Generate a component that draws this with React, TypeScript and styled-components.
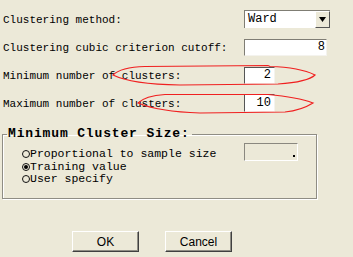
import React from "react";
import styled, { createGlobalStyle } from "styled-components";

const GlobalStyle = createGlobalStyle`
  html, body {
    margin: 0;
    padding: 0;
    background: #ece9d8;
  }
  body {
    font-family: "Liberation Mono", "DejaVu Sans Mono", monospace;
    font-size: 11px;
    color: #000;
  }
`;

const Dialog = styled.div`
  position: relative;
  width: 353px;
  height: 257px;
  overflow: hidden;
  background: #ece9d8;
`;

const Form = styled.div`
  display: grid;
  grid-template-columns: 241px auto;
  grid-auto-rows: 28px;
  align-items: center;
  padding: 5px 0 0 3px;
`;

const Label = styled.div`
  line-height: 13px;
  padding-top: 2px;
  white-space: nowrap;
`;

const TextBox = styled.div<{ $w: number; $h: number; $strong?: boolean }>`
  box-sizing: border-box;
  width: ${p => p.$w}px;
  height: ${p => p.$h}px;
  background: #fff;
  border-top: 1px solid ${p => (p.$strong ? "#555" : "#7f7d74")};
  border-left: 1px solid ${p => (p.$strong ? "#555" : "#7f7d74")};
  border-right: 1px solid #f4f3ee;
  border-bottom: 1px solid #f4f3ee;
  display: flex;
  align-items: center;
  justify-content: flex-end;
  padding: 0 ${p => (p.$strong ? 3 : 1)}px 0 3px;
  font-size: 12px;
  line-height: 14px;
  overflow: hidden;
`;

const Combo = styled.div`
  box-sizing: border-box;
  width: 86px;
  height: 18px;
  display: flex;
  background: #fff;
  border-top: 1px solid #7f7d74;
  border-left: 1px solid #7f7d74;
`;

const ComboValue = styled.div`
  flex: 1 1 auto;
  padding-left: 3px;
  font-size: 12px;
  line-height: 16px;
`;

const ComboButton = styled.div`
  box-sizing: border-box;
  width: 15px;
  height: 17px;
  background: #ece9d8;
  border-top: 1px solid #fff;
  border-left: 1px solid #fff;
  border-right: 1px solid #555;
  border-bottom: 1px solid #555;
  display: flex;
  align-items: center;
  justify-content: center;
`;

const Group = styled.fieldset`
  box-sizing: border-box;
  margin: 10px 0 0 2px;
  width: 315px;
  height: 72px;
  padding: 0 0 0 19px;
  border: 1px solid #8f8d84;
  box-shadow: 1px 1px 0 #fff, inset 1px 1px 0 #fff;
`;

const Legend = styled.legend`
  margin-left: -15px;
  padding: 0 2px 0 1px;
  font-size: 13px;
  font-weight: bold;
  letter-spacing: 0.85px;
  line-height: 14px;
`;

const Options = styled.div`
  display: grid;
  grid-template-columns: 222px auto;
  grid-auto-rows: 12.5px;
  align-items: center;
  margin-top: 7px;
`;

const Option = styled.div`
  display: flex;
  align-items: center;
  gap: 0;
  font-size: 11.5px;
  line-height: 12px;
  white-space: nowrap;
  grid-column: 1;
`;

const Radio = styled.span<{ $on?: boolean }>`
  box-sizing: border-box;
  width: 8px;
  height: 8px;
  border: 1px solid #111;
  border-radius: 50%;
  display: inline-flex;
  align-items: center;
  justify-content: center;
  &::after {
    content: "";
    width: 4px;
    height: 4px;
    border-radius: 50%;
    background: ${p => (p.$on ? "#000" : "transparent")};
  }
`;

const DisabledBox = styled.div`
  grid-column: 2;
  grid-row: 1;
  align-self: center;
  box-sizing: border-box;
  width: 54px;
  height: 18px;
  margin-top: -5px;
  border-top: 1px solid #8a887f;
  border-left: 1px solid #8a887f;
  border-right: 1px solid #fff;
  border-bottom: 1px solid #fff;
  display: flex;
  align-items: flex-end;
  justify-content: flex-end;
  padding: 0 2px 3px 0;
`;

const Dot = styled.span`
  width: 2px;
  height: 2px;
  background: #000;
`;

const Buttons = styled.div`
  display: flex;
  gap: 26px;
  padding: 32px 0 0 72px;
`;

const Button = styled.button`
  box-sizing: border-box;
  width: 67px;
  height: 21px;
  padding: 0;
  margin: 0;
  background: #ece9d8;
  border-top: 1px solid #fff;
  border-left: 1px solid #fff;
  border-right: 1px solid #404040;
  border-bottom: 1px solid #404040;
  box-shadow: inset -1px -1px 0 #8f8d84;
  font-family: "Liberation Sans", Arial, sans-serif;
  font-size: 12px;
  color: #000;
`;

const Marks = styled.svg`
  position: absolute;
  left: 0;
  top: 0;
  pointer-events: none;
`;

export default function App() {
  return (
    <Dialog>
      <GlobalStyle />
      <Form>
        <Label>Clustering method:</Label>
        <Combo>
          <ComboValue>Ward</ComboValue>
          <ComboButton>
            <svg width="7" height="7" viewBox="0 0 7 7">
              <path d="M0 1h7L3.5 6z" fill="#000" />
            </svg>
          </ComboButton>
        </Combo>
        <Label>Clustering cubic criterion cutoff:</Label>
        <TextBox $w={83} $h={17}>8</TextBox>
        <Label>Minimum number of clusters:</Label>
        <TextBox $w={31} $h={17} $strong>2</TextBox>
        <Label>Maximum number of clusters:</Label>
        <TextBox $w={31} $h={18} $strong>10</TextBox>
      </Form>
      <Group>
        <Legend>Minimum Cluster Size:</Legend>
        <Options>
          <Option>
            <Radio />
            Proportional to sample size
          </Option>
          <DisabledBox>
            <Dot />
          </DisabledBox>
          <Option>
            <Radio $on />
            Training value
          </Option>
          <Option>
            <Radio />
            User specify
          </Option>
        </Options>
      </Group>
      <Buttons>
        <Button>OK</Button>
        <Button>Cancel</Button>
      </Buttons>
      <Marks width="353" height="257" viewBox="0 0 353 257">
        <g fill="none" stroke="#f02020" strokeWidth="1.2">
          <path d="M113 75C118 70 128 67 145 66.5L268 65.5L270 66.5C290 67 305 70 315 75C310 80 300 82.5 278 84L180 85C150 84.5 125 81 113 75Z" />
          <path d="M138 103C142 99 150 95.5 165 94.5L268 94.5C285 96 300 98 313 103C305 108 295 111 285 112L200 113C170 112 150 108 138 103Z" />
        </g>
      </Marks>
    </Dialog>
  );
}
